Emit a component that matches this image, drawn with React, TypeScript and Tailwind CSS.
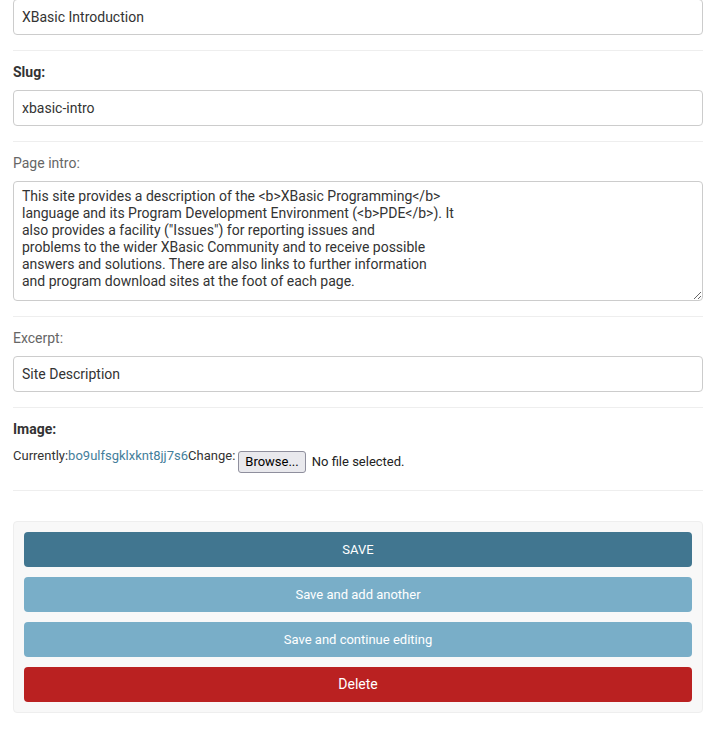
const INTRO = `This site provides a description of the <b>XBasic Programming</b>
language and its Program Development Environment (<b>PDE</b>). It
also provides a facility ("Issues") for reporting issues and
problems to the wider XBasic Community and to receive possible
answers and solutions. There are also links to further information
and program download sites at the foot of each page.`

const inputCls =
  'block w-full h-[36px] px-2 rounded-[4px] border border-[#ccc] bg-white text-[14px] text-[#333] outline-none'

function Row({ label, bold, children }: { label: string; bold?: boolean; children: React.ReactNode }) {
  return (
    <div className="border-b border-[#eee] pt-[11px] pb-[15px]">
      <div className={`text-[14px] leading-[20px] mb-2 ${bold ? 'font-bold text-[#333]' : 'text-[#666]'}`}>{label}</div>
      {children}
    </div>
  )
}

function ActionButton({ label, color, size = 'text-[13px]' }: { label: string; color: string; size?: string }) {
  return (
    <button className={`h-[35px] w-full rounded-[4px] text-white flex items-center justify-center whitespace-nowrap ${size} ${color}`}>
      {label}
    </button>
  )
}

export default function App() {
  return (
    <div className="bg-white min-h-[742px] pl-[13px] pr-[11px] font-['Roboto',sans-serif] overflow-hidden">
      <div className="border-b border-[#eee] pb-[15px] -mt-px">
        <input className={inputCls} defaultValue="XBasic Introduction" readOnly />
      </div>

      <Row label="Slug:" bold>
        <input className={inputCls} defaultValue="xbasic-intro" readOnly />
      </Row>

      <Row label="Page intro:">
        <textarea
          className="block w-full h-[120px] px-2 pt-[6px] rounded-[4px] border border-[#ccc] bg-white text-[14px] leading-[17px] text-[#333] outline-none resize-y"
          defaultValue={INTRO}
          readOnly
        />
      </Row>

      <Row label="Excerpt:">
        <input className={inputCls} defaultValue="Site Description" readOnly />
      </Row>

      <div className="border-b border-[#eee] pt-[11px] pb-[17px]">
        <div className="text-[14px] leading-[20px] font-bold text-[#333]">Image:</div>
        <div className="flex items-start mt-2 text-[13px] text-[#333]">
          <span className="leading-[18px]">
            Currently:<a className="text-[#447e9b]">bo9ulfsgklxknt8jj7s6</a>Change:
          </span>
          <div className="flex items-center mt-1 ml-[3px]">
            <span className="h-[22px] px-[6px] flex items-center rounded-[3px] border border-[#8f8f9d] bg-[#e9e9ed] text-[13px] text-black">
              Browse...
            </span>
            <span className="ml-[6px] text-[13px] text-[#222]">No file selected.</span>
          </div>
        </div>
      </div>

      <div className="mt-[30px] rounded-[4px] border border-[#eee] bg-[#f8f8f8] p-[10px] flex flex-col gap-[10px]">
        <ActionButton label="SAVE" color="bg-[#417690]" />
        <ActionButton label="Save and add another" color="bg-[#79aec8]" />
        <ActionButton label="Save and continue editing" color="bg-[#79aec8]" />
        <ActionButton label="Delete" color="bg-[#ba2121]" size="text-[14px]" />
      </div>
    </div>
  )
}
